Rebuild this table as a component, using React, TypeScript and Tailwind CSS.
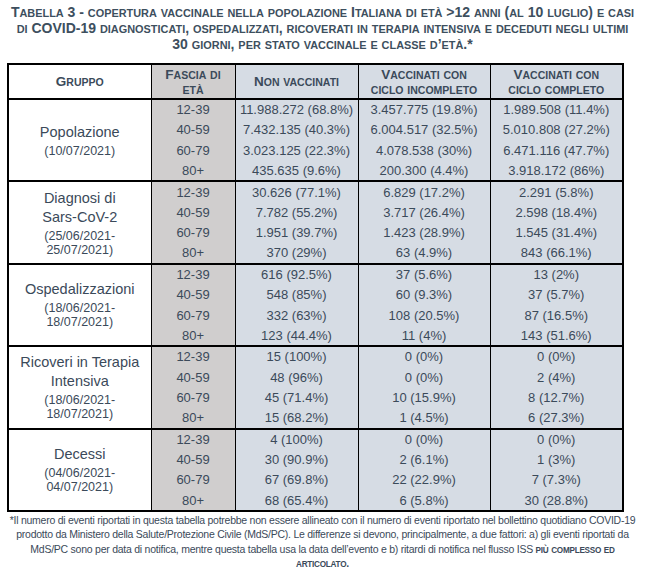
import React from "react";

type Group = {
  name: React.ReactNode;
  dates: React.ReactNode;
  rows: [string, string, string, string][];
};

// small caps by hand: lowercase runs are upper-cased and shrunk
const SC = ({ t }: { t: string }) => {
  const parts = t.split(/([a-zàèéìòù]+)/);
  return (
    <>
      {parts.map((p, i) =>
        /^[a-zàèéìòù]+$/.test(p) ? (
          <span key={i} className="text-[0.78em] leading-none">
            {p.toUpperCase()}
          </span>
        ) : (
          <React.Fragment key={i}>{p}</React.Fragment>
        )
      )}
    </>
  );
};

const groups: Group[] = [
  {
    name: "Popolazione",
    dates: "(10/07/2021)",
    rows: [
      ["12-39", "11.988.272 (68.8%)", "3.457.775 (19.8%)", "1.989.508 (11.4%)"],
      ["40-59", "7.432.135 (40.3%)", "6.004.517 (32.5%)", "5.010.808 (27.2%)"],
      ["60-79", "3.023.125 (22.3%)", "4.078.538 (30%)", "6.471.116 (47.7%)"],
      ["80+", "435.635 (9.6%)", "200.300 (4.4%)", "3.918.172 (86%)"],
    ],
  },
  {
    name: (
      <>
        Diagnosi di
        <br />
        Sars-CoV-2
      </>
    ),
    dates: (
      <>
        (25/06/2021-
        <br />
        25/07/2021)
      </>
    ),
    rows: [
      ["12-39", "30.626 (77.1%)", "6.829 (17.2%)", "2.291 (5.8%)"],
      ["40-59", "7.782 (55.2%)", "3.717 (26.4%)", "2.598 (18.4%)"],
      ["60-79", "1.951 (39.7%)", "1.423 (28.9%)", "1.545 (31.4%)"],
      ["80+", "370 (29%)", "63 (4.9%)", "843 (66.1%)"],
    ],
  },
  {
    name: "Ospedalizzazioni",
    dates: (
      <>
        (18/06/2021-
        <br />
        18/07/2021)
      </>
    ),
    rows: [
      ["12-39", "616 (92.5%)", "37 (5.6%)", "13 (2%)"],
      ["40-59", "548 (85%)", "60 (9.3%)", "37 (5.7%)"],
      ["60-79", "332 (63%)", "108 (20.5%)", "87 (16.5%)"],
      ["80+", "123 (44.4%)", "11 (4%)", "143 (51.6%)"],
    ],
  },
  {
    name: (
      <>
        Ricoveri in Terapia
        <br />
        Intensiva
      </>
    ),
    dates: (
      <>
        (18/06/2021-
        <br />
        18/07/2021)
      </>
    ),
    rows: [
      ["12-39", "15 (100%)", "0 (0%)", "0 (0%)"],
      ["40-59", "48 (96%)", "0 (0%)", "2 (4%)"],
      ["60-79", "45 (71.4%)", "10 (15.9%)", "8 (12.7%)"],
      ["80+", "15 (68.2%)", "1 (4.5%)", "6 (27.3%)"],
    ],
  },
  {
    name: "Decessi",
    dates: (
      <>
        (04/06/2021-
        <br />
        04/07/2021)
      </>
    ),
    rows: [
      ["12-39", "4 (100%)", "0 (0%)", "0 (0%)"],
      ["40-59", "30 (90.9%)", "2 (6.1%)", "1 (3%)"],
      ["60-79", "67 (69.8%)", "22 (22.9%)", "7 (7.3%)"],
      ["80+", "68 (65.4%)", "6 (5.8%)", "30 (28.8%)"],
    ],
  },
];

export default function App() {
  return (
    <div className="w-[645px] h-[571px] bg-white text-[#3b4a5a] font-['Liberation_Sans',Arial,sans-serif] overflow-hidden">
      {/* Title */}
      <h1 className="pt-[4px] text-center text-[14px] leading-[16px] font-bold text-[#3d4f5e] whitespace-nowrap">
        <SC t="Tabella 3 - copertura vaccinale nella popolazione Italiana di età >12 anni (al 10 luglio) e casi" />
        <br />
        <SC t="di COVID-19 diagnosticati, ospedalizzati, ricoverati in terapia intensiva e deceduti negli ultimi" />
        <br />
        <SC t="30 giorni, per stato vaccinale e classe d’età.*" />
      </h1>

      {/* Table */}
      <table className="mt-[11px] ml-[7px] w-[615px] table-fixed border-collapse border-2 border-black">
        <colgroup>
          <col className="w-[143px]" />
          <col className="w-[84px]" />
          <col className="w-[123px]" />
          <col className="w-[132px]" />
          <col className="w-[133px]" />
        </colgroup>
        <thead>
          <tr className="h-[35px] text-[13.5px] leading-[15px] font-bold">
            <th className="border border-black border-b-2 bg-white">
              <SC t="Gruppo" />
            </th>
            <th className="border border-black border-b-2 bg-[#d0cece]">
              <SC t="Fascia di" />
              <br />
              <SC t="età" />
            </th>
            <th className="border border-black border-b-2 bg-[#d6dce4]">
              <SC t="Non vaccinati" />
            </th>
            <th className="border border-black border-b-2 bg-[#d6dce4]">
              <SC t="Vaccinati con" />
              <br />
              <SC t="ciclo incompleto" />
            </th>
            <th className="border border-black border-b-2 bg-[#d6dce4]">
              <SC t="Vaccinati con" />
              <br />
              <SC t="ciclo completo" />
            </th>
          </tr>
        </thead>
        <tbody className="text-[13px] leading-[15px]">
          {groups.map((g, gi) =>
            g.rows.map((r, ri) => (
              <tr
                key={`${gi}-${ri}`}
                className={`h-[20.6px] ${ri === 3 ? "border-b-2 border-black" : ""}`}
              >
                {ri === 0 && (
                  <td rowSpan={4} className="border border-black border-b-2 bg-white text-center align-middle">
                    <div className="text-[14.5px] leading-[19px]">{g.name}</div>
                    <div className="text-[12.5px] leading-[14px] mt-[2px]">{g.dates}</div>
                  </td>
                )}
                <td className="border-x border-black bg-[#d0cece] text-center">{r[0]}</td>
                <td className="border-x border-black bg-[#d6dce4] text-center">{r[1]}</td>
                <td className="border-x border-black bg-[#d6dce4] text-center">{r[2]}</td>
                <td className="border-x border-black bg-[#d6dce4] text-center">{r[3]}</td>
              </tr>
            ))
          )}
        </tbody>
      </table>

      {/* Footnote */}
      <p className="mt-[1px] text-center text-[10.5px] leading-[14.5px] tracking-[-0.25px] whitespace-nowrap">
        *Il numero di eventi riportati in questa tabella potrebbe non essere allineato con il numero di eventi riportato nel bollettino quotidiano COVID-19
        <br />
        prodotto da Ministero della Salute/Protezione Civile (MdS/PC). Le differenze si devono, principalmente, a due fattori: a) gli eventi riportati da
        <br />
        MdS/PC sono per data di notifica, mentre questa tabella usa la data dell’evento e b) ritardi di notifica nel flusso ISS{" "}
        <span className="font-bold">
          <SC t="più complesso ed" />
        </span>
        <br />
        <span className="font-bold">
          <SC t="articolato." />
        </span>
      </p>
    </div>
  );
}
